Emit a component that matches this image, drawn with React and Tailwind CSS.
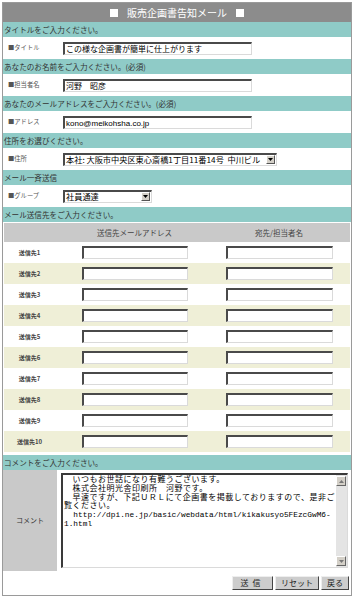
import React from "react";

const sections = [
  { title: "タイトルをご入力ください。", label: "■タイトル", kind: "input", value: "この様な企画書が簡単に仕上がります", w: "w-[189px]" },
  { title: "あなたのお名前をご入力ください。(必須)", label: "■担当者名", kind: "input", value: "河野　昭彦", w: "w-[189px]" },
  { title: "あなたのメールアドレスをご入力ください。(必須)", label: "■アドレス", kind: "input", value: "kono@meikohsha.co.jp", w: "w-[189px]" },
  { title: "住所をお選びください。", label: "■住所", kind: "select", value: "本社: 大阪市中央区東心斎橋1丁目11番14号  中川ビル", w: "w-[214px]" },
  { title: "メール一斉送信", label: "■グループ", kind: "select", value: "社員通達", w: "w-[89px]" },
];

const recipients = [1, 2, 3, 4, 5, 6, 7, 8, 9, 10];

function SectionTitle({ children }) {
  return (
    <div className="h-[15px] bg-[#8fcbc7] pl-[1px] text-[7.6px] leading-[15px] text-[#333]">
      {children}
    </div>
  );
}

function InsetBox({ className = "", children }) {
  return (
    <div
      className={`h-[13px] bg-white border-t-2 border-l-2 border-r border-b border-t-[#4a4a4a] border-l-[#4a4a4a] border-r-[#dadada] border-b-[#dadada] ${className}`}
    >
      {children}
    </div>
  );
}

function DropArrow() {
  return (
    <div className="flex h-[9px] w-[9px] items-center justify-center border border-t-white border-l-white border-r-[#555] border-b-[#555] bg-[#d4d0c8]">
      <svg width="5" height="3" viewBox="0 0 5 3">
        <path d="M0 0 L5 0 L2.5 3 Z" fill="#000" />
      </svg>
    </div>
  );
}

function ScrollArrow({ up }) {
  return (
    <div className="flex h-[10px] w-[10px] items-center justify-center border border-t-white border-l-white border-r-[#666] border-b-[#666] bg-[#d4d0c8]">
      <svg width="5" height="3" viewBox="0 0 5 3">
        <path d={up ? "M0 3 L5 3 L2.5 0 Z" : "M0 0 L5 0 L2.5 3 Z"} fill="#777" />
      </svg>
    </div>
  );
}

function Btn({ children }) {
  return (
    <div className="flex h-[14px] items-center justify-center border border-t-[#eee] border-l-[#eee] border-r-[#444] border-b-[#444] bg-[#cdcdcd] px-[5px] text-[8px] text-[#222]">
      {children}
    </div>
  );
}

export default function App() {
  return (
    <div className="min-h-[602px] bg-white pl-[2px] pt-[2px] font-['Noto_Sans_CJK_JP',sans-serif]">
      <div className="w-[350px] border border-[#9a9a9a] bg-white">
        {/* title bar */}
        <div className="flex h-[19px] items-center justify-center gap-[9px] bg-[#8c8c8c]">
          <div className="h-[8px] w-[8px] bg-white" />
          <span className="text-[10px] leading-none text-white">販売企画書告知メール</span>
          <div className="h-[8px] w-[8px] bg-white" />
        </div>

        {sections.map((s) => (
          <div key={s.label}>
            <SectionTitle>{s.title}</SectionTitle>
            <div className="flex h-[22px] items-center">
              <div className="w-[60px] pl-[5px] text-[6.3px] text-[#555]">{s.label}</div>
              {s.kind === "input" ? (
                <InsetBox className={`${s.w} pl-[1px] text-[8px] leading-[11px] text-black font-['Liberation_Sans','Noto_Sans_CJK_JP',sans-serif]`}>
                  {s.value}
                </InsetBox>
              ) : (
                <InsetBox className={`${s.w} flex items-center justify-between pl-[1px] pr-[1px] text-[8.2px] leading-[11px] text-black`}>
                  <span className="whitespace-pre">{s.value}</span>
                  <DropArrow />
                </InsetBox>
              )}
            </div>
          </div>
        ))}

        <SectionTitle>メール送信先をご入力ください。</SectionTitle>
        <div className="px-[1px] pt-[1px] pb-[3px]">
          <div className="grid h-[19px] grid-cols-[57px_147px_142px] items-center bg-[#c9c9c9] text-[7.5px] text-[#444]">
            <div />
            <div className="text-center">送信先メールアドレス</div>
            <div className="text-center">宛先/担当者名</div>
          </div>
          {recipients.map((n) => (
            <div
              key={n}
              className={`grid h-[21px] grid-cols-[57px_147px_142px] items-center ${n % 2 === 0 ? "bg-[#efefd7]" : "bg-white"}`}
            >
              <div className="pr-[6px] text-center text-[6px] font-bold text-[#444]">送信先{n}</div>
              <div className="flex justify-center">
                <InsetBox className="w-[106px]" />
              </div>
              <div className="flex justify-center">
                <InsetBox className="w-[107px]" />
              </div>
            </div>
          ))}
        </div>

        <SectionTitle>コメントをご入力ください。</SectionTitle>
        <div className="flex h-[101px]">
          <div className="flex w-[54px] items-center justify-center bg-[#c9c9c9] text-[7px] text-[#333]">
            コメント
          </div>
          <div className="ml-[4px] mt-[3px] flex h-[95px] w-[287px] border-t-2 border-l-2 border-r border-b border-t-[#3a3a3a] border-l-[#3a3a3a] border-r-[#dadada] border-b-[#dadada] bg-white">
            <div className="flex-1 overflow-hidden pl-[1px] pt-[1px] text-black font-['Liberation_Mono','Noto_Sans_CJK_JP',monospace]">
              <div className="whitespace-pre text-[8px] leading-[8.8px] tracking-[0.5px]">　いつもお世話になり有難うございます。</div>
              <div className="whitespace-pre text-[8px] leading-[8.8px] tracking-[0.5px]">　株式会社明光舎印刷所　河野です。</div>
              <div className="whitespace-pre text-[8px] leading-[8.8px] tracking-[0.5px]">　早速ですが、下記ＵＲＬにて企画書を掲載しておりますので、是非ご</div>
              <div className="whitespace-pre text-[8px] leading-[8.8px] tracking-[0.5px]">覧ください。</div>
              <div className="whitespace-pre text-[7.8px] leading-[8.8px]">  http://dpi.ne.jp/basic/webdata/html/kikakusyo5FEzcGwM6-</div>
              <div className="whitespace-pre text-[7.8px] leading-[8.8px]">1.html</div>
            </div>
            <div className="flex w-[11px] flex-col justify-between bg-[#e4e4e4] py-[1px] pr-[1px]">
              <ScrollArrow up />
              <ScrollArrow />
            </div>
          </div>
        </div>

        <div className="flex h-[24px] items-center justify-end gap-[2px] pr-[2px]">
          <Btn>
            <span className="w-[29px] text-center tracking-[4px]">送信</span>
          </Btn>
          <Btn>リセット</Btn>
          <Btn>戻る</Btn>
        </div>
      </div>
    </div>
  );
}
